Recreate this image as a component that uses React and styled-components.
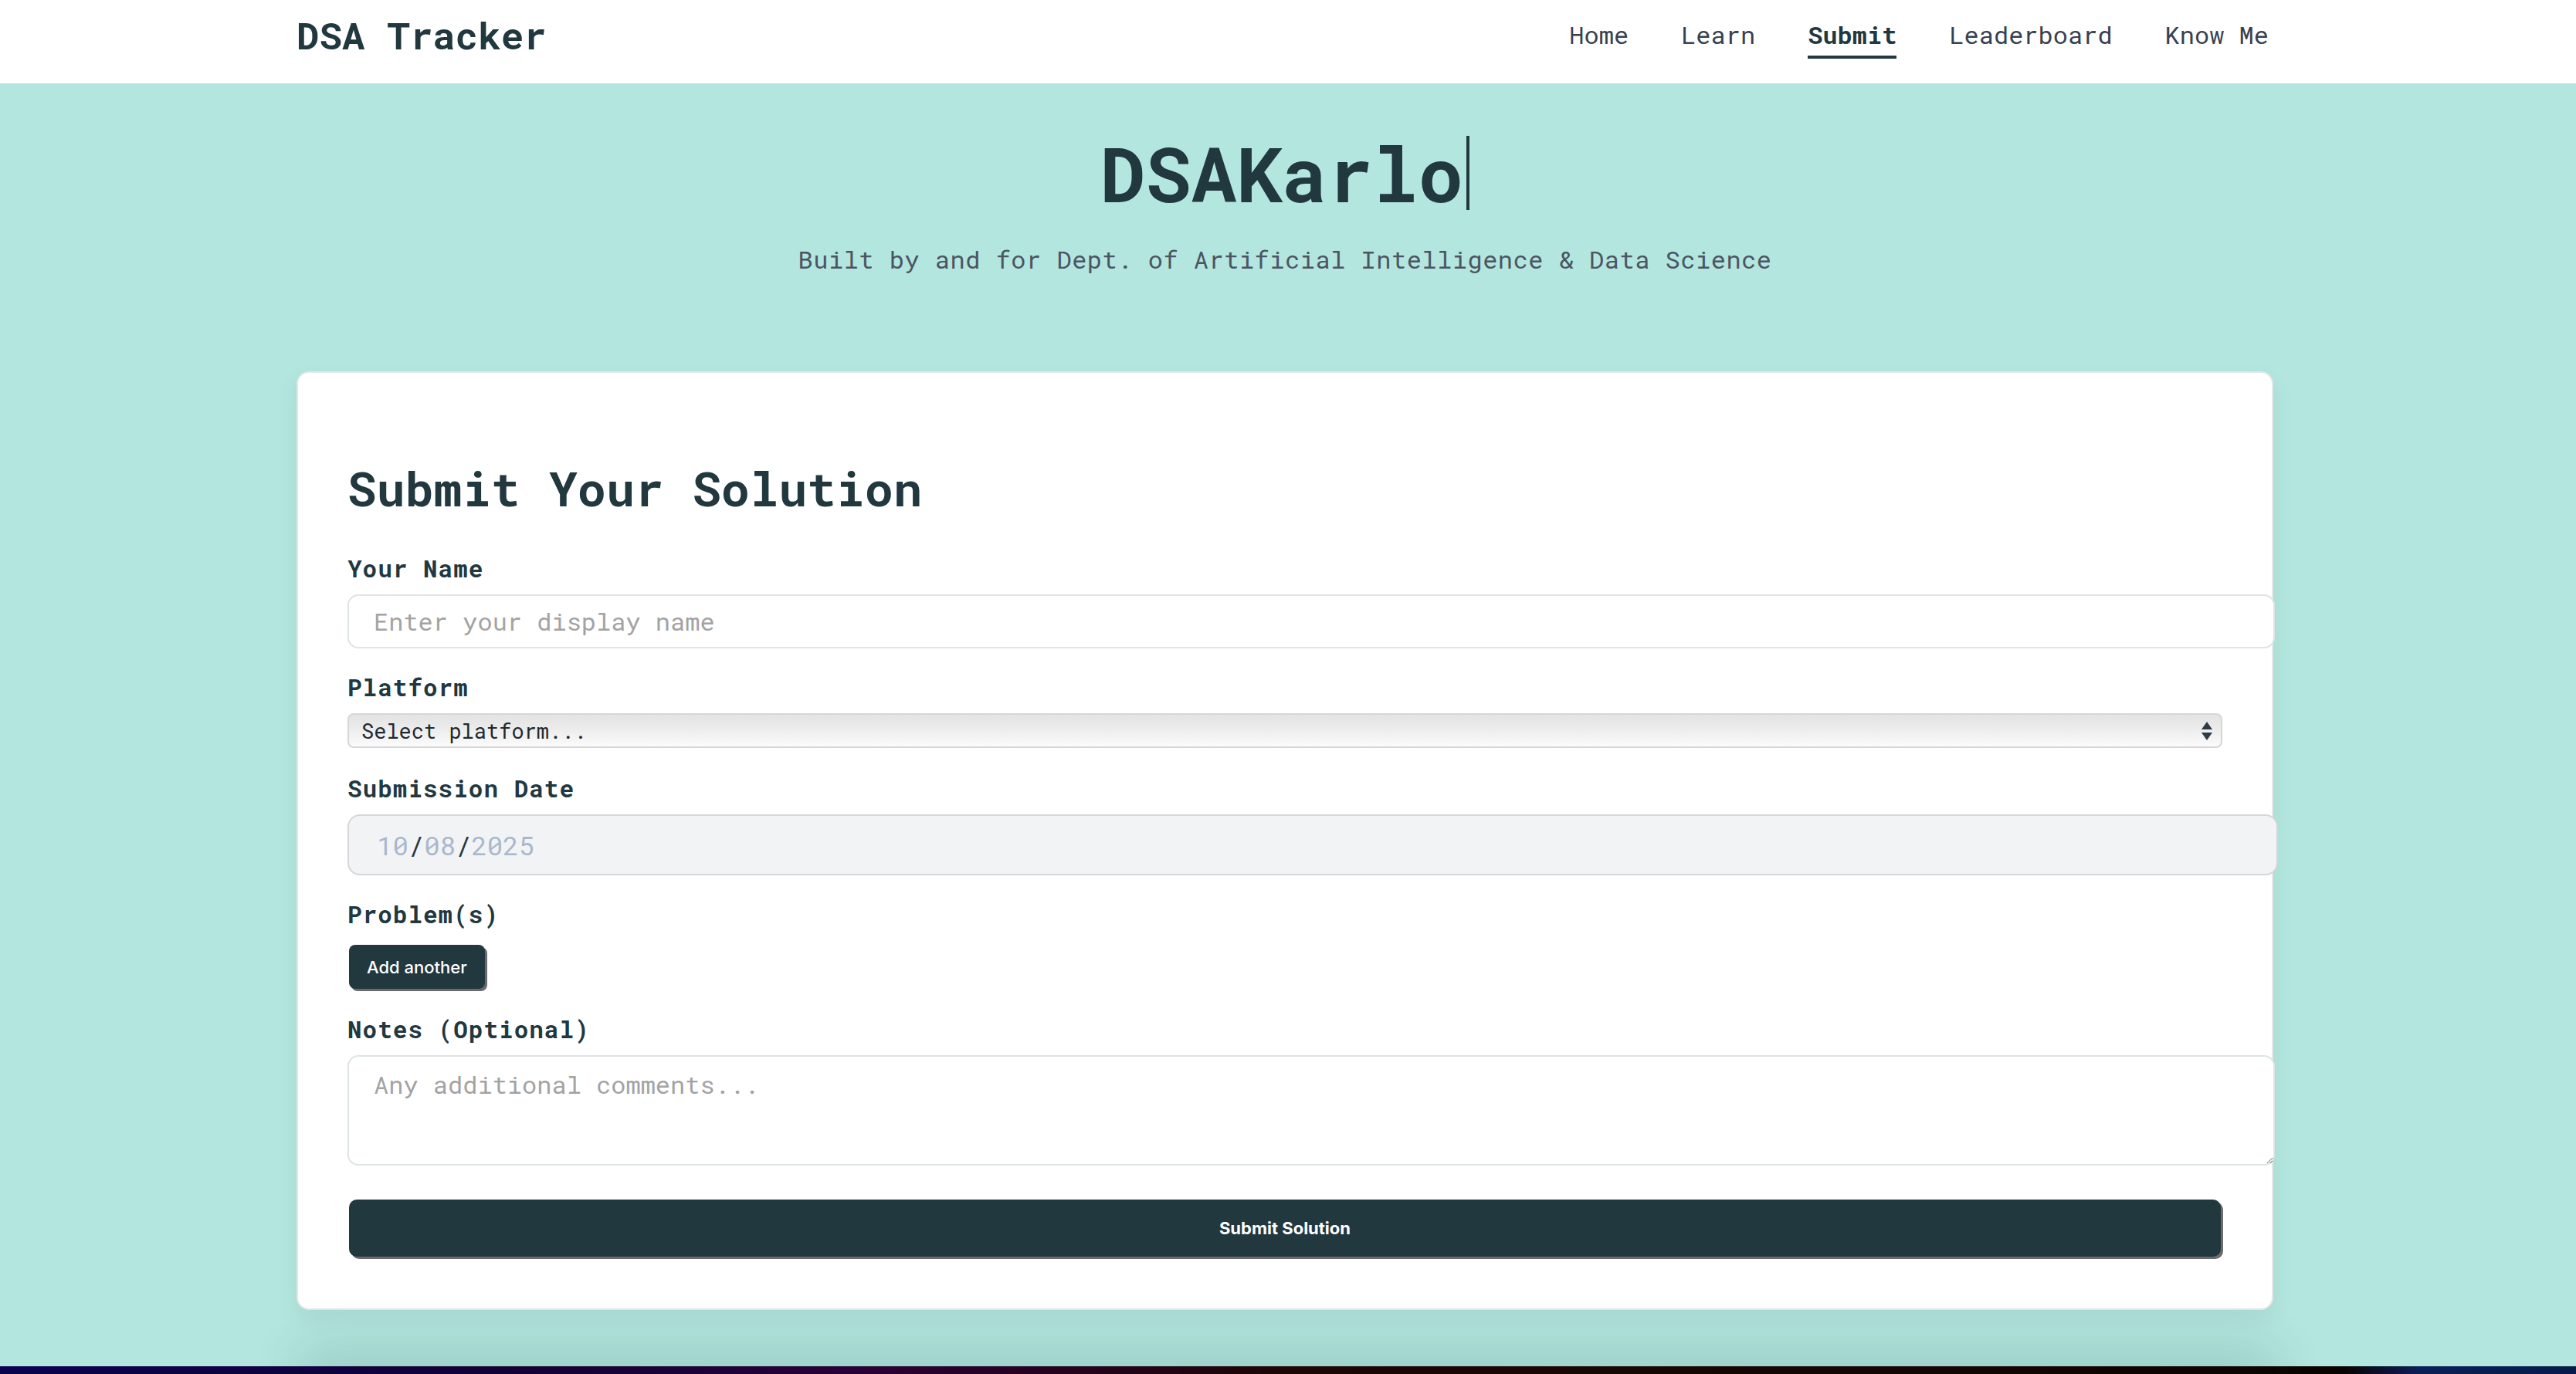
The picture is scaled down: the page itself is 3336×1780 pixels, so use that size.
import styled, { createGlobalStyle } from "styled-components";

const mono = `"Roboto Mono", "Liberation Mono", "DejaVu Sans Mono", monospace`;
const sans = `Inter, "Liberation Sans", Arial, sans-serif`;
const ink = "#22383f";

const GlobalStyle = createGlobalStyle`
  html, body {
    margin: 0;
    padding: 0;
    background: #b3e6de;
    font-family: ${mono};
    color: ${ink};
  }
`;

const navItems = ["Home", "Learn", "Submit", "Leaderboard", "Know Me"];

const App = () => {
  return (
    <>
      <GlobalStyle />
      <Header>
        <HeaderInner>
          <Logo>DSA Tracker</Logo>
          <Nav>
            {navItems.map((item) => (
              <NavLink key={item} $active={item === "Submit"}>
                {item}
              </NavLink>
            ))}
          </Nav>
        </HeaderInner>
      </Header>

      <Hero>
        <Title>DSAKarlo</Title>
        <Subtitle>Built by and for Dept. of Artificial Intelligence &amp; Data Science</Subtitle>
      </Hero>

      <Main>
        <Card>
          <Heading>Submit Your Solution</Heading>

          <Field $gap={30}>
            <Label>Your Name</Label>
            <TextInput placeholder="Enter your display name" />
          </Field>

          <Field $gap={32}>
            <Label>Platform</Label>
            <SelectWrap>
              <Select defaultValue="">
                <option value="">Select platform...</option>
                <option value="leetcode">LeetCode</option>
                <option value="gfg">GeeksforGeeks</option>
              </Select>
              <SelectArrows width="16" height="28" viewBox="0 0 16 28">
                <path d="M8 2 L15 12 L1 12 Z" fill="#2d3a48" />
                <path d="M1 16 L15 16 L8 26 Z" fill="#2d3a48" />
              </SelectArrows>
            </SelectWrap>
          </Field>

          <Field $gap={30}>
            <Label>Submission Date</Label>
            <DateField>
              <DatePart>10</DatePart>
              <DateSlash>/</DateSlash>
              <DatePart>08</DatePart>
              <DateSlash>/</DateSlash>
              <DatePart>2025</DatePart>
            </DateField>
          </Field>

          <Field $gap={32}>
            <Label>Problem(s)</Label>
            <SmallButton type="button">Add another</SmallButton>
          </Field>

          <Field $gap={44}>
            <Label>Notes (Optional)</Label>
            <TextArea placeholder="Any additional comments..." />
          </Field>

          <SubmitButton type="button">Submit Solution</SubmitButton>
        </Card>
      </Main>

      <Footer>
        <FooterInner />
      </Footer>
    </>
  );
};

/* the reference page leaves an 8px scrollbar gutter on the right */
const Header = styled.header`
  background: #ffffff;
  height: 108px;
  padding-right: 8px;
`;

const HeaderInner = styled.div`
  width: 2560px;
  margin: 0 auto;
  height: 100%;
  box-sizing: border-box;
  padding-top: 13px;
  display: flex;
  justify-content: space-between;
  align-items: flex-start;
`;

const Logo = styled.div`
  font-size: 49px;
  line-height: 64px;
  font-weight: 700;
  color: ${ink};
`;

const Nav = styled.nav`
  display: flex;
  gap: 68px;
  margin-top: 8px;
  margin-right: 6px;
`;

const NavLink = styled.a`
  font-size: 32px;
  line-height: 48px;
  padding-bottom: 3px;
  border-bottom: 4px solid ${(p) => (p.$active ? ink : "transparent")};
  font-weight: ${(p) => (p.$active ? 700 : 400)};
  color: ${(p) => (p.$active ? ink : "#374151")};
  cursor: pointer;
`;

const Hero = styled.section`
  text-align: center;
  padding: 68px 8px 0 0;
`;

const Title = styled.h1`
  display: inline-block;
  margin: 0;
  font-size: 98px;
  line-height: 96px;
  font-weight: 700;
  color: ${ink};
  padding-right: 4px;
  border-right: 4px solid ${ink};
`;

const Subtitle = styled.p`
  margin: 40px 0 0;
  font-size: 32px;
  line-height: 48px;
  letter-spacing: 0.5px;
  color: #4b5563;
`;

const Main = styled.main`
  padding: 121px 8px 73px 0;
`;

const Card = styled.div`
  width: 2560px;
  box-sizing: border-box;
  margin: 0 auto;
  background: #ffffff;
  border: 2px solid #e3e7e7;
  border-radius: 16px;
  box-shadow: 0 10px 30px rgba(0, 0, 0, 0.06);
  padding: 64px 64px 67px;
`;

const Heading = styled.h2`
  margin: 49px 0 48px;
  font-size: 62px;
  line-height: 72px;
  font-weight: 700;
  color: ${ink};
`;

const Field = styled.div`
  display: flex;
  flex-direction: column;
  align-items: stretch;
  margin-bottom: ${(p) => p.$gap}px;
`;

const Label = styled.label`
  display: block;
  font-size: 31px;
  line-height: 40px;
  letter-spacing: 1px;
  font-weight: 700;
  color: ${ink};
  margin-bottom: 14px;
`;

const TextInput = styled.input`
  display: block;
  box-sizing: content-box;
  width: 100%;
  padding: 14px 32px;
  border: 2px solid #dfe4e4;
  border-radius: 14px;
  font-family: ${mono};
  font-size: 32px;
  line-height: 38px;
  height: 38px;
  color: ${ink};
  background: #ffffff;
  outline: none;

  &::placeholder {
    color: #a3a3a3;
  }
`;

const SelectWrap = styled.div`
  position: relative;
`;

const Select = styled.select`
  appearance: none;
  display: block;
  width: 100%;
  height: 45px;
  padding: 0 16px;
  border: 2px solid #d6d6d6;
  border-radius: 8px;
  background: linear-gradient(#e3e3e3 0%, #ececec 45%, #fbfbfb 100%);
  font-family: ${mono};
  font-size: 27px;
  color: #1f2a30;
  outline: none;
`;

const SelectArrows = styled.svg`
  position: absolute;
  right: 12px;
  top: 9px;
  pointer-events: none;
`;

const DateField = styled.div`
  box-sizing: content-box;
  width: 100%;
  height: 39px;
  padding: 18px 32px 18px 36px;
  border: 2px solid #d4d6da;
  border-radius: 16px;
  background: #f2f3f5;
  font-size: 34px;
  line-height: 39px;
  display: flex;
`;

const DatePart = styled.span`
  color: #a9b8cc;
`;

const DateSlash = styled.span`
  color: ${ink};
`;

const SmallButton = styled.button`
  align-self: flex-start;
  height: 57px;
  margin: 6px 0 0 2px;
  padding: 0 23px;
  background: ${ink};
  color: #ffffff;
  font-family: ${sans};
  font-size: 22px;
  font-weight: 500;
  border: 0;
  border-radius: 8px;
  box-shadow: 3px 3px 0 #6b6b6b;
  cursor: pointer;
`;

const TextArea = styled.textarea`
  display: block;
  box-sizing: content-box;
  width: 100%;
  height: 107px;
  padding: 16px 32px;
  border: 2px solid #dfe4e4;
  border-radius: 14px;
  font-family: ${mono};
  font-size: 32px;
  line-height: 40px;
  color: ${ink};
  outline: none;

  &::placeholder {
    color: #a3a3a3;
  }
`;

const SubmitButton = styled.button`
  display: block;
  width: calc(100% - 4px);
  margin-left: 2px;
  height: 74px;
  background: ${ink};
  color: #ffffff;
  font-family: ${sans};
  font-size: 22px;
  font-weight: 700;
  border: 0;
  border-radius: 10px;
  box-shadow: 3px 3px 0 #6b6b6b;
  cursor: pointer;
`;

const Footer = styled.footer`
  height: 300px;
  background: linear-gradient(
    90deg,
    #0b0052 0%,
    #150033 20%,
    #2a0033 34%,
    #1f0505 50%,
    #170404 75%,
    #0c0202 91%,
    #0a1f5a 94%,
    #081a48 100%
  );
`;

const FooterInner = styled.div`
  width: 2560px;
  margin: 0 auto;
  height: 100%;
  box-shadow: 0 -30px 60px rgba(0, 60, 50, 0.12);
`;

export default App;
